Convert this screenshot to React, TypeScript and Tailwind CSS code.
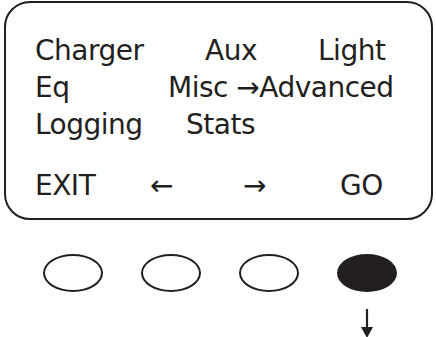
import React from 'react';

const FONT = "font-['DejaVu_Sans',sans-serif]";

function Row({ cells, className = '' }: { cells: [string, string][]; className?: string }) {
  return (
    <div className={`flex h-[37px] items-end leading-none ${className}`}>
      {cells.map(([text, w], i) => (
        <span key={i} className={`${w} whitespace-nowrap`}>
          {text}
        </span>
      ))}
    </div>
  );
}

function Oval({ filled }: { filled?: boolean }) {
  return (
    <div
      className={`h-[38px] w-[60px] rounded-[50%] border-[2.5px] border-[#231f20] ${
        filled ? 'bg-[#231f20]' : 'bg-white'
      }`}
    />
  );
}

export default function App() {
  return (
    <div className={`h-[337px] w-[436px] bg-white text-[#231f20] ${FONT}`}>
      <div className="pl-[4px] pt-[1px]">
        <div className="h-[219px] w-[429px] rounded-[26px] border-2 border-[#231f20] pl-[29px] pt-[25px] text-[28px] tracking-[-0.5px]">
          <Row cells={[['Charger', 'w-[170px]'], ['Aux', 'w-[113px]'], ['Light', '']]} />
          <Row cells={[['Eq', 'w-[133px]'], ['Misc \u2192Advanced', '']]} />
          <Row cells={[['Logging', 'w-[151px]'], ['Stats', '']]} />
          <Row
            className="mt-[24px]"
            cells={[['EXIT', 'w-[115px]'], ['\u2190', 'w-[93px]'], ['\u2192', 'w-[97px]'], ['GO', '']]}
          />
        </div>
      </div>

      <div className="mt-[34px] flex gap-[38px] pl-[43px]">
        <Oval />
        <Oval />
        <Oval />
        <Oval filled />
      </div>

      <div className="mt-[17px] pl-[360px]">
        <svg width="14" height="29" viewBox="0 0 14 29">
          <line x1="7" y1="0" x2="7" y2="20" stroke="#231f20" strokeWidth="2.2" />
          <path d="M1 18 L13 18 L7 29 Z" fill="#231f20" />
        </svg>
      </div>
    </div>
  );
}
